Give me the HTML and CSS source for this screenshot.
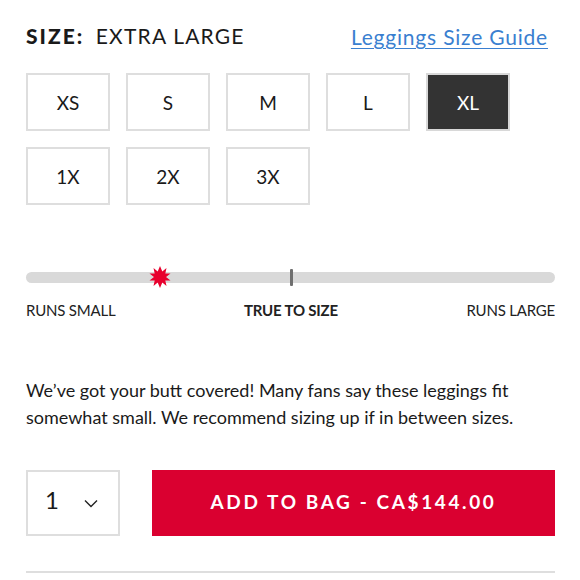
FILE: index.html
```html
<!DOCTYPE html>
<html>
<head>
<meta charset="utf-8">
<link rel="stylesheet" href="styles.css">
</head>
<body>
<div class="page">
  <div class="header">
    <div class="size-title"><span class="size-key">SIZE:</span> <span class="size-val">EXTRA LARGE</span></div>
    <a class="guide" href="#">Leggings Size Guide</a>
  </div>
  <div class="sizes">
    <div class="size">XS</div>
    <div class="size">S</div>
    <div class="size">M</div>
    <div class="size">L</div>
    <div class="size selected">XL</div>
    <div class="size">1X</div>
    <div class="size">2X</div>
    <div class="size">3X</div>
  </div>
  <div class="fit">
    <div class="track">
      <span class="tick"></span>
      <svg class="star" width="24" height="24" viewBox="-12 -12 24 24"><polygon fill="#e8002d" points="0,-11 2.3,-5.4 6.5,-8.9 5.3,-3.6 10.5,-3.4 6,0 10.5,3.4 5.3,3.6 6.5,8.9 2.3,5.4 0,11 -2.3,5.4 -6.5,8.9 -5.3,3.6 -10.5,3.4 -6,0 -10.5,-3.4 -5.3,-3.6 -6.5,-8.9 -2.3,-5.4"/></svg>
    </div>
    <div class="labels">
      <span>RUNS SMALL</span>
      <span class="mid">TRUE TO SIZE</span>
      <span>RUNS LARGE</span>
    </div>
  </div>
  <p class="note">We’ve got your butt covered! Many fans say these leggings fit somewhat small. We recommend sizing up if in between sizes.</p>
  <div class="actions">
    <div class="qty"><span class="num">1</span><svg width="14" height="9" viewBox="0 0 14 9"><polyline points="1,1.5 7,7.5 13,1.5" fill="none" stroke="#222" stroke-width="1.4"/></svg></div>
    <button class="add">ADD TO BAG - CA$144.00</button>
  </div>
  <div class="rule"></div>
</div>
</body>
</html>
```
FILE: styles.css
```css
html, body { margin: 0; padding: 0; background: #fff; }
body { font-family: Lato, "Open Sans", sans-serif; color: #1a1a1a; }
.page { width: 529px; margin-left: 26px; padding-top: 21px; }
.header { display: flex; justify-content: space-between; align-items: center; height: 28px; }
.size-title { font-size: 21px; letter-spacing: 1.2px; color: #1a1a1a; }
.size-key { font-weight: 900; letter-spacing: 2px; margin-right: 5px; }
.size-val { font-weight: 400; }
.guide { font-size: 21px; color: #3a7fd0; letter-spacing: 0.8px; text-decoration: underline; text-underline-offset: 3px; text-decoration-thickness: 1px; margin-right: 7px; margin-top: 2px; }
.sizes { display: grid; grid-template-columns: repeat(5, 84px); grid-auto-rows: 58px; gap: 16px; margin-top: 24px; }
.size { border: 2px solid #dedede; display: flex; align-items: center; justify-content: center; font-size: 19px; color: #1a1a1a; }
.size.selected { background: #333; color: #fff; border-color: #d8d8d8; }
.fit { margin-top: 67px; }
.track { position: relative; height: 11px; border-radius: 6px; background: #d9d9d9; }
.tick { position: absolute; left: 264px; top: -3px; width: 3px; height: 17px; background: #6f6f6f; border-radius: 1px; }
.star { position: absolute; left: 122px; top: -7px; }
.labels { display: flex; justify-content: space-between; margin-top: 18px; font-size: 15px; color: #222; letter-spacing: -0.2px; }
.labels .mid { font-weight: 700; }
.note { margin: 58px 0 0; font-size: 18px; line-height: 27px; color: #1a1a1a; }
.actions { display: flex; gap: 32px; margin-top: 39px; height: 66px; }
.qty { width: 94px; box-sizing: border-box; border: 2px solid #dedede; display: flex; align-items: center; padding-left: 17px; gap: 25px; }
.qty .num { font-size: 24px; margin-top: -8px; }
.add { flex: 1; border: none; background: #da0030; color: #fff; font-family: Lato, sans-serif; font-weight: 700; font-size: 19px; letter-spacing: 2.6px; padding: 0 0 4px; }
.rule { height: 2px; background: #dedede; margin-top: 35px; }
```
